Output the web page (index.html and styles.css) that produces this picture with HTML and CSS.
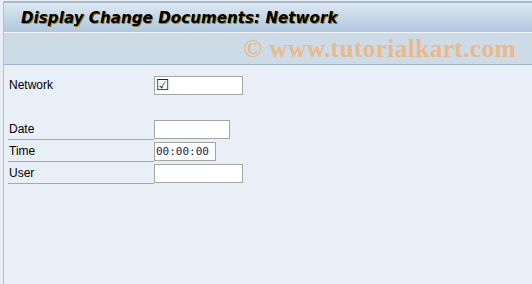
FILE: index.html
```html
<!DOCTYPE html>
<html lang="en">

<head>
  <meta charset="UTF-8" />
  <title>Display Change Documents: Network</title>
  <meta name="viewport" content="width=device-width, initial-scale=1.0" />
  <link rel="stylesheet" href="styles.css">
</head>

<body>

  <div class="frame">
    <div class="title-bar">
      <h1>Display Change Documents: Network</h1>
    </div>

    <div class="toolbar">
      <span class="watermark">© www.tutorialkart.com</span>
    </div>

    <div class="content">
      <div class="row">
        <label class="label">Network</label>
        <div class="field field-wide"><span class="check">&#9745;</span></div>
      </div>

      <div class="row row-empty"></div>

      <div class="row">
        <label class="label label-line">Date</label>
        <div class="field field-date"></div>
      </div>
      <div class="row">
        <label class="label label-line">Time</label>
        <div class="field field-time">00:00:00</div>
      </div>
      <div class="row">
        <label class="label label-line">User</label>
        <div class="field field-wide"></div>
      </div>
    </div>
  </div>

</body>

</html>
```

FILE: styles.css
```css
/* ─── BASE ───────────────────────────────────────────────────────── */
* {
  box-sizing: border-box;
  margin: 0;
  padding: 0;
}

html,
body {
  height: 100%;
  background: #e8eef5;
  font-family: Tahoma, "DejaVu Sans", sans-serif;
  overflow: hidden;
}

body {
  padding: 1px 0 0 3px;
}

.frame {
  display: flex;
  flex-direction: column;
  height: 100%;
  border-top: 2px solid #a9b9c9;
  border-left: 1px solid #b3c1cf;
}

/* ─── TITLE ──────────────────────────────────────────────────────── */
.title-bar {
  height: 30px;
  padding-left: 17px;
  display: flex;
  align-items: center;
  background: linear-gradient(#dde8f2, #afc7dd);
  border-bottom: 1px solid #f2f6fa;
}

.title-bar h1 {
  font-family: "DejaVu Sans", sans-serif;
  font-size: 15px;
  font-weight: bold;
  font-style: italic;
  color: #000;
  letter-spacing: 0.1px;
  text-shadow: 1px 1px 0 #9c7a1c;
}

/* ─── TOOLBAR ────────────────────────────────────────────────────── */
.toolbar {
  height: 32px;
  display: flex;
  align-items: center;
  justify-content: flex-end;
  padding-right: 16px;
  background: #cddbe7;
  border-bottom: 1px solid #a3b6c8;
}

.watermark {
  font-family: "Liberation Serif", serif;
  font-size: 25.5px;
  font-weight: bold;
  color: #eab98c;
  letter-spacing: 0.3px;
}

/* ─── FORM ───────────────────────────────────────────────────────── */
.content {
  flex: 1;
  background: #e8eff7;
  padding: 9px 0 0 4px;
}

.row {
  display: flex;
  align-items: center;
  height: 22px;
}

.row-empty {
  height: 22px;
}

.label {
  width: 146px;
  height: 21px;
  display: flex;
  align-items: center;
  padding-left: 1px;
  font-size: 12px;
  color: #000;
  font-family: Tahoma, "Liberation Sans", sans-serif;
}

.label-line {
  border-bottom: 1px solid #a8a8a8;
  margin-top: 1px;
}

.field {
  height: 19px;
  background: #fff;
  border: 1px solid #a5a5a5;
  display: flex;
  align-items: center;
}

.field-wide {
  width: 89px;
}

.field-date {
  width: 76px;
}

.field-time {
  width: 62px;
  padding-left: 1px;
  font-family: "DejaVu Sans Mono", monospace;
  font-size: 11px;
  color: #1a1a50;
}

.check {
  font-size: 15px;
  line-height: 1;
  padding-left: 1px;
  color: #222;
}
```
